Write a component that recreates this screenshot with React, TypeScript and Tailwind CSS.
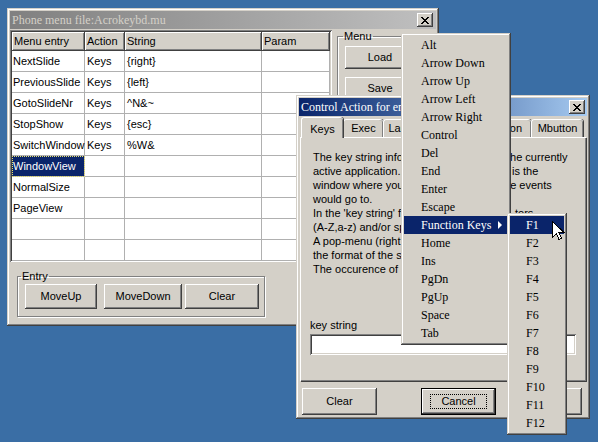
import React from 'react';

const sans = "font-['Liberation_Sans',Arial,sans-serif] text-[11px]";
const serif = "font-['Liberation_Serif','Times_New_Roman',serif] text-[12px]";
const raised = 'shadow-[inset_-1px_-1px_#404040,inset_1px_1px_#ffffff,inset_-2px_-2px_#808080,inset_2px_2px_#d4d0c8]';
const frame = 'shadow-[inset_-1px_-1px_#404040,inset_1px_1px_#d4d0c8,inset_-2px_-2px_#808080,inset_2px_2px_#ffffff]';
const sunken = 'shadow-[inset_1px_1px_#808080,inset_-1px_-1px_#ffffff,inset_2px_2px_#404040,inset_-2px_-2px_#d4d0c8]';

const rows = [
    ['NextSlide', 'Keys', '{right}', ''],
    ['PreviousSlide', 'Keys', '{left}', ''],
    ['GotoSlideNr', 'Keys', '^N&~', ''],
    ['StopShow', 'Keys', '{esc}', ''],
    ['SwitchWindow', 'Keys', '%W&', ''],
    ['WindowView', '', '', ''],
    ['NormalSize', '', '', ''],
    ['PageView', '', '', ''],
    ['', '', '', ''],
    ['', '', '', ''],
];

// left part / part that shows right of the pop-menu (the rest lies under it)
const helpLines: { left: string; right?: string; gap?: string }[] = [
    { left: 'The key string info', right: 'the currently', gap: 'ml-[106px]' },
    { left: 'active application.', right: 'is the', gap: 'ml-[111px]' },
    { left: 'window where you', right: 'the events', gap: 'ml-[100px]' },
    { left: 'would go to.' },
    { left: "In the 'key string' fi", right: 'tors', gap: 'ml-[114px]' },
    { left: '(A-Z,a-z) and/or sp' },
    { left: 'A pop-menu (right' },
    { left: 'the format of the sp' },
    { left: 'The occurence of' },
];

const menuItems = [
    'Alt',
    'Arrow Down',
    'Arrow Up',
    'Arrow Left',
    'Arrow Right',
    'Control',
    'Del',
    'End',
    'Enter',
    'Escape',
    'Function Keys',
    'Home',
    'Ins',
    'PgDn',
    'PgUp',
    'Space',
    'Tab',
];

const fKeys = ['F1', 'F2', 'F3', 'F4', 'F5', 'F6', 'F7', 'F8', 'F9', 'F10', 'F11', 'F12'];

const tabs = [
    { label: 'Exec', w: 'w-[40px]' },
    { label: 'Launch', w: 'w-[46px]' },
    { label: '', w: 'w-[44px]' },
    { label: 'Position', w: 'w-[58px]' },
    { label: 'Mbutton', w: 'w-[52px]' },
];

const Btn = ({ children, className = '' }: { children?: React.ReactNode; className?: string }) => (
    <div className={`flex shrink-0 items-center justify-center bg-[#d4d0c8] text-black ${raised} ${className}`}>{children}</div>
);

const CloseBox = ({ className = '' }: { className?: string }) => (
    <div className={`flex h-[14px] w-[16px] shrink-0 items-center justify-center bg-[#d4d0c8] ${raised} ${className}`}>
        <svg width="8" height="7" viewBox="0 0 8 7" shapeRendering="crispEdges">
            <path d="M0 0h2v1h-2zM6 0h2v1h-2zM1 1h2v1h-2zM5 1h2v1h-2zM2 2h4v1h-4zM3 3h2v1h-2zM2 4h4v1h-4zM1 5h2v1h-2zM5 5h2v1h-2zM0 6h2v1h-2zM6 6h2v1h-2z" fill="#000" />
        </svg>
    </div>
);

const KeyTable = () => (
    <div className={`h-[232px] w-[322px] shrink-0 bg-white p-[2px] ${sunken}`}>
        <div className="grid grid-cols-[73px_40px_137px_68px]">
            {['Menu entry', 'Action', 'String', 'Param'].map((h) => (
                <div
                    key={h}
                    className="flex h-[19px] items-center border-b border-r border-[#404040] bg-[#d4d0c8] pl-[2px] shadow-[inset_1px_1px_#ffffff,inset_-1px_-1px_#808080]"
                >
                    {h}
                </div>
            ))}
            {rows.map((r, i) =>
                r.map((c, j) => {
                    const sel = i === 5 && j === 0;
                    return (
                        <div
                            key={`${i}-${j}`}
                            className={`flex h-[21px] items-center whitespace-nowrap border-b border-r border-[#b0b0b0] pl-[1px] ${
                                sel ? 'bg-[#0a246a] text-white outline-1 -outline-offset-1 outline-dotted outline-[#e8e070]' : 'text-black'
                            }`}
                        >
                            <span className={j === 0 ? '' : 'pl-[1px]'}>{c}</span>
                        </div>
                    );
                })
            )}
        </div>
    </div>
);

const MainWindow = () => (
    <div className={`absolute left-[7px] top-[8px] flex h-[318px] w-[432px] flex-col bg-[#d4d0c8] p-[3px] ${frame} ${sans}`}>
        <div className="flex h-[18px] shrink-0 items-center justify-between bg-linear-to-r from-[#808080] to-[#c0c0c0] pl-[2px] pr-[3px]">
            <span className={`${serif} text-[#d4d0c8]`}>Phone menu file:Acrokeybd.mu</span>
            <CloseBox />
        </div>
        <div className="mt-[1px] flex">
            <div className="flex flex-col">
                <KeyTable />
                <fieldset className="ml-[7px] mt-[8px] w-[248px] border border-[#808080] pb-[7px] pl-[7px] pt-[1px] shadow-[inset_1px_1px_#ffffff,1px_1px_#ffffff]">
                    <legend className="-ml-[4px] px-[1px] leading-[13px]">Entry</legend>
                    <div className="flex">
                        <Btn className="h-[25px] w-[72px]">MoveUp</Btn>
                        <Btn className="ml-[7px] h-[25px] w-[78px]">MoveDown</Btn>
                        <Btn className="ml-[3px] h-[25px] w-[74px]">Clear</Btn>
                    </div>
                </fieldset>
            </div>
            <fieldset className="ml-[5px] h-[120px] w-[92px] border border-[#808080] pl-[7px] pt-[3px] shadow-[inset_1px_1px_#ffffff,1px_1px_#ffffff]">
                <legend className="-ml-[2px] px-[1px] leading-[13px]">Menu</legend>
                <Btn className="h-[23px] w-[70px]">Load</Btn>
                <Btn className="mt-[8px] h-[23px] w-[70px]">Save</Btn>
            </fieldset>
        </div>
    </div>
);

const Dialog = () => (
    <div className={`absolute left-[296px] top-[95px] flex h-[324px] w-[294px] flex-col bg-[#d4d0c8] p-[3px] ${frame} ${sans}`}>
        <div className="flex h-[18px] shrink-0 items-center justify-between bg-linear-to-r from-[#0a246a] to-[#a6caf0] pl-[2px] pr-[2px]">
            <span className={`${serif} whitespace-nowrap text-white`}>Control Action for en</span>
            <CloseBox />
        </div>
        <div className="mt-[1px] flex h-[20px] shrink-0 items-end pl-[2px]">
            <div className="relative z-10 -mb-[1px] flex h-[21px] w-[42px] items-start justify-center rounded-t-[3px] border-l border-t border-white bg-[#d4d0c8] pt-[3px] shadow-[inset_-1px_0_#808080,1px_0_#404040]">
                Keys
            </div>
            {tabs.map((t, i) => (
                <div
                    key={i}
                    className={`flex h-[18px] ${t.w} items-center justify-center rounded-t-[3px] border-l border-t border-white bg-[#d4d0c8] shadow-[inset_-1px_0_#808080,1px_0_#404040]`}
                >
                    {t.label}
                </div>
            ))}
        </div>
        <div className="ml-[1px] flex h-[244px] w-[286px] shrink-0 flex-col border-l border-t border-white pl-[12px] pt-[12px] shadow-[inset_-1px_-1px_#808080,1px_1px_#404040]">
            {helpLines.map((l) => (
                <div key={l.left} className="flex h-[14px] whitespace-nowrap leading-[14px]">
                    <span className="w-[88px] shrink-0">{l.left}</span>
                    {l.right && <span className={l.gap}>{l.right}</span>}
                </div>
            ))}
            <div className="-ml-[3px] mt-[42px] h-[14px] leading-[14px]">key string</div>
            <div className={`-ml-[3px] mt-[2px] h-[21px] w-[266px] bg-white ${sunken}`} />
        </div>
        <div className="mt-[7px] flex">
            <Btn className="ml-[3px] h-[27px] w-[75px]">Clear</Btn>
            <div className="ml-[44px] h-[27px] w-[75px] border border-black">
                <Btn className="h-full w-full">
                    <span className="border border-dotted border-black px-[10px] leading-[13px]">Cancel</span>
                </Btn>
            </div>
            <Btn className="ml-[11px] h-[27px] w-[75px]" />
        </div>
    </div>
);

const PopupMenu = () => (
    <div className={`absolute left-[401px] top-[33px] flex h-[312px] w-[110px] flex-col bg-[#d4d0c8] p-[3px] ${frame} ${serif}`}>
        {menuItems.map((m) => {
            const hi = m === 'Function Keys';
            return (
                <div
                    key={m}
                    className={`flex h-[18px] shrink-0 items-center justify-between pl-[17px] pr-[6px] ${hi ? 'bg-[#0a246a] text-white' : 'text-black'}`}
                >
                    <span>{m}</span>
                    {hi && <span className="h-0 w-0 border-y-[4px] border-l-[4px] border-y-transparent border-l-white" />}
                </div>
            );
        })}
    </div>
);

const SubMenu = () => (
    <div className={`absolute left-[507px] top-[213px] flex h-[222px] w-[60px] flex-col bg-[#d4d0c8] p-[3px] ${frame} ${serif}`}>
        {fKeys.map((k) => (
            <div
                key={k}
                className={`flex h-[18px] shrink-0 items-center pl-[16px] ${k === 'F1' ? 'bg-[#0a246a] text-white' : 'text-black'}`}
            >
                {k}
            </div>
        ))}
    </div>
);

const Cursor = () => (
    <svg className="absolute left-[552px] top-[221px]" width="13" height="20" viewBox="0 0 13 20" shapeRendering="crispEdges">
        <path d="M0.5 0.5V16.5L4.5 12.5L7 18.5L9.5 17.5L7 11.5H12Z" fill="#fff" stroke="#000" strokeWidth="1" />
    </svg>
);

export default function App() {
    return (
        <div className="relative h-[442px] w-[598px] overflow-hidden bg-[#3a6ea5]">
            <MainWindow />
            <Dialog />
            <PopupMenu />
            <SubMenu />
            <Cursor />
        </div>
    );
}
